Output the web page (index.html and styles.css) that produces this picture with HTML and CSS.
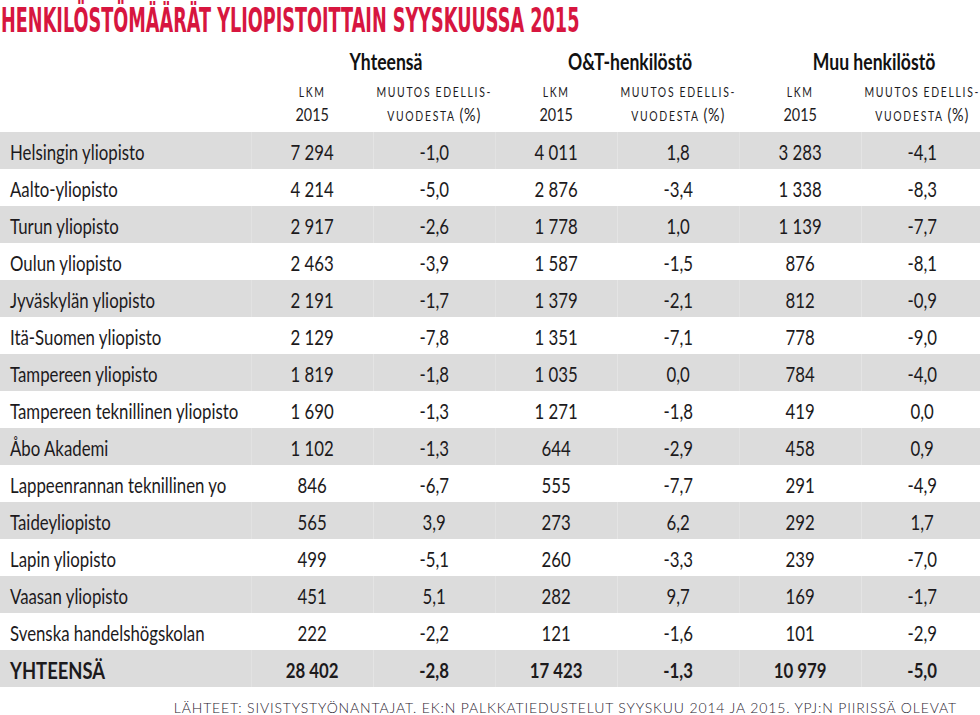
FILE: index.html
```html
<!DOCTYPE html>
<html lang="fi">
<head>
<meta charset="utf-8">
<title>Henkilöstömäärät yliopistoittain</title>
<link rel="stylesheet" href="styles.css">
</head>
<body>
<div class="page">
  <h1 class="title"><span class="title-text">HENKILÖSTÖMÄÄRÄT YLIOPISTOITTAIN SYYSKUUSSA 2015</span></h1>
  <div class="table-wrap">
  <table class="grid">
    <colgroup>
      <col class="c-name"><col class="c-num"><col class="c-num"><col class="c-num"><col class="c-num"><col class="c-num"><col class="c-num">
    </colgroup>
    <thead>
      <tr class="groups">
        <th></th>
        <th colspan="2">Yhteensä</th>
        <th colspan="2">O&amp;T-henkilöstö</th>
        <th colspan="2">Muu henkilöstö</th>
      </tr>
      <tr class="subs">
        <th></th>
        <th><span class="small">LKM</span><br><span class="year">2015</span></th>
        <th><span class="small">MUUTOS EDELLIS-</span><br><span class="small">VUODESTA</span> <span class="pct">(%)</span></th>
        <th><span class="small">LKM</span><br><span class="year">2015</span></th>
        <th><span class="small">MUUTOS EDELLIS-</span><br><span class="small">VUODESTA</span> <span class="pct">(%)</span></th>
        <th><span class="small">LKM</span><br><span class="year">2015</span></th>
        <th><span class="small">MUUTOS EDELLIS-</span><br><span class="small">VUODESTA</span> <span class="pct">(%)</span></th>
      </tr>
    </thead>
    <tbody>
      <tr><td>Helsingin yliopisto</td><td>7 294</td><td>-1,0</td><td>4 011</td><td>1,8</td><td>3 283</td><td>-4,1</td></tr>
      <tr><td>Aalto-yliopisto</td><td>4 214</td><td>-5,0</td><td>2 876</td><td>-3,4</td><td>1 338</td><td>-8,3</td></tr>
      <tr><td>Turun yliopisto</td><td>2 917</td><td>-2,6</td><td>1 778</td><td>1,0</td><td>1 139</td><td>-7,7</td></tr>
      <tr><td>Oulun yliopisto</td><td>2 463</td><td>-3,9</td><td>1 587</td><td>-1,5</td><td>876</td><td>-8,1</td></tr>
      <tr><td>Jyväskylän yliopisto</td><td>2 191</td><td>-1,7</td><td>1 379</td><td>-2,1</td><td>812</td><td>-0,9</td></tr>
      <tr><td>Itä-Suomen yliopisto</td><td>2 129</td><td>-7,8</td><td>1 351</td><td>-7,1</td><td>778</td><td>-9,0</td></tr>
      <tr><td>Tampereen yliopisto</td><td>1 819</td><td>-1,8</td><td>1 035</td><td>0,0</td><td>784</td><td>-4,0</td></tr>
      <tr><td>Tampereen teknillinen yliopisto</td><td>1 690</td><td>-1,3</td><td>1 271</td><td>-1,8</td><td>419</td><td>0,0</td></tr>
      <tr><td>Åbo Akademi</td><td>1 102</td><td>-1,3</td><td>644</td><td>-2,9</td><td>458</td><td>0,9</td></tr>
      <tr><td>Lappeenrannan teknillinen yo</td><td>846</td><td>-6,7</td><td>555</td><td>-7,7</td><td>291</td><td>-4,9</td></tr>
      <tr><td>Taideyliopisto</td><td>565</td><td>3,9</td><td>273</td><td>6,2</td><td>292</td><td>1,7</td></tr>
      <tr><td>Lapin yliopisto</td><td>499</td><td>-5,1</td><td>260</td><td>-3,3</td><td>239</td><td>-7,0</td></tr>
      <tr><td>Vaasan yliopisto</td><td>451</td><td>5,1</td><td>282</td><td>9,7</td><td>169</td><td>-1,7</td></tr>
      <tr><td>Svenska handelshögskolan</td><td>222</td><td>-2,2</td><td>121</td><td>-1,6</td><td>101</td><td>-2,9</td></tr>
      <tr class="total"><td>YHTEENSÄ</td><td>28 402</td><td>-2,8</td><td>17 423</td><td>-1,3</td><td>10 979</td><td>-5,0</td></tr>
    </tbody>
  </table>
  </div>
  <p class="source">LÄHTEET: SIVISTYSTYÖNANTAJAT. EK:N PALKKATIEDUSTELUT SYYSKUU 2014 JA 2015. YPJ:N PIIRISSÄ OLEVAT</p>
</div>
</body>
</html>
```

FILE: styles.css
```css
html, body {
  margin: 0;
  padding: 0;
  background: #ffffff;
}
body {
  width: 980px;
  height: 715px;
  overflow: hidden;
  font-family: "Lato", "Liberation Sans", sans-serif;
  color: #1c1a1c;
}
.page {
  width: 983px;
}
.title {
  margin: 0;
  height: 40px;
  padding-left: 1px;
  white-space: nowrap;
}
.title-text {
  display: inline-block;
  font-family: "DejaVu Sans Condensed", "DejaVu Sans", sans-serif;
  font-weight: 700;
  font-size: 33px;
  line-height: 36px;
  color: #d7163f;
  transform: scaleX(0.595);
  transform-origin: left center;
}
.table-wrap {
  width: 983px;
  height: 647px;
}
.grid {
  width: 1229px;
  border-collapse: collapse;
  table-layout: fixed;
  transform: scaleX(0.8);
  transform-origin: left top;
}
.c-name { width: 314px; }
.c-num { width: 152.5px; }
.groups th {
  padding: 10px 0 2px 32px;
  line-height: 24px;
  font-size: 22px;
  font-weight: 700;
  text-align: center;
  vertical-align: top;
  color: #111;
}
.subs th {
  padding: 3px 0 5px;
  font-size: 18px;
  font-weight: 400;
  text-align: center;
  vertical-align: top;
  line-height: 22px;
  color: #1c1a1c;
}
.small {
  font-size: 13px;
  letter-spacing: 2.1px;
}
.year {
  font-size: 18px;
}
.pct {
  font-size: 18px;
  letter-spacing: 1px;
}
tbody td {
  height: 37px;
  padding: 2px 0 0;
  box-sizing: border-box;
  font-size: 21px;
  line-height: 24px;
  text-align: center;
  vertical-align: middle;
  white-space: nowrap;
}
tbody td:first-child {
  text-align: left;
  padding-left: 12.5px;
}
tbody tr:nth-child(odd) {
  background: #dcdcdc;
}
.total td {
  font-weight: 700;
}
.total td:first-child {
  font-size: 23px;
}
.source {
  margin: 13px 0 0;
  width: 957px;
  text-align: right;
  font-weight: 300;
  font-size: 14px;
  line-height: 16px;
  letter-spacing: 0.85px;
  color: #2a2330;
  white-space: nowrap;
}
```
